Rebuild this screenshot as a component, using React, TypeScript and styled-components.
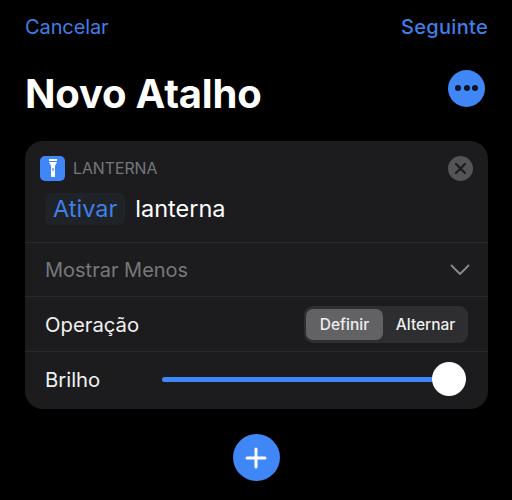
import React from "react";
import styled, { createGlobalStyle } from "styled-components";

const Global = createGlobalStyle`
  html, body { margin: 0; padding: 0; background: #000; }
  body { font-family: Inter, "Liberation Sans", sans-serif; }
`;

const Page = styled.div`
  width: 512px;
  height: 500px;
  overflow: hidden;
  background: #000;
  box-sizing: border-box;
  padding: 15px 24px 0 25px;
  display: flex;
  flex-direction: column;
`;

const NavBar = styled.div`
  display: flex;
  justify-content: space-between;
  align-items: center;
  height: 24px;
`;

const NavLink = styled.span<{ $strong?: boolean }>`
  font-size: 20px;
  line-height: 24px;
  letter-spacing: ${(p) => (p.$strong ? "0.3px" : "-0.1px")};
  font-weight: ${(p) => (p.$strong ? 500 : 400)};
  color: #3f7fe6;
`;

const TitleRow = styled.div`
  display: flex;
  justify-content: space-between;
  align-items: center;
  margin-top: 30px;
  height: 38px;
  padding-right: 3px;
`;

const Title = styled.h1`
  margin: 0;
  padding-top: 12px;
  font-size: 40px;
  line-height: 48px;
  font-weight: 700;
  letter-spacing: -0.2px;
  color: #fff;
`;

const MoreButton = styled.div`
  width: 37px;
  height: 37px;
  border-radius: 50%;
  background: #3f86f7;
  display: flex;
  align-items: center;
  justify-content: center;
  gap: 2.5px;
`;

const Dot = styled.span`
  width: 6px;
  height: 6px;
  border-radius: 50%;
  background: #0b1526;
`;

const Card = styled.div`
  margin-top: 34px;
  height: 268px;
  background: #1c1c1e;
  border-radius: 18px;
  display: flex;
  flex-direction: column;
`;

const ActionSection = styled.div`
  height: 101px;
  box-sizing: border-box;
  padding: 14px 15px 0;
`;

const ActionHeader = styled.div`
  display: flex;
  align-items: center;
  height: 26px;
  gap: 8px;
`;

const AppIcon = styled.div`
  width: 25px;
  height: 25px;
  border-radius: 5px;
  background: #3f86f7;
  display: flex;
  align-items: center;
  justify-content: center;
`;

const ActionName = styled.span`
  flex: 1;
  font-size: 15.8px;
  color: #77777b;
`;

const CloseButton = styled.div`
  width: 25px;
  height: 25px;
  border-radius: 50%;
  background: #545456;
  display: flex;
  align-items: center;
  justify-content: center;
`;

const Sentence = styled.div`
  display: flex;
  align-items: center;
  gap: 10px;
  margin: 12px 0 0 5px;
`;

const Token = styled.span`
  font-size: 23.5px;
  line-height: 32px;
  color: #3f7fe6;
  background: #1f2226;
  border-radius: 6px;
  padding: 0 8px;
`;

const Word = styled.span`
  font-size: 23.5px;
  line-height: 32px;
  color: #fff;
`;

const Row = styled.div<{ $height: number; $lift?: number }>`
  height: ${(p) => p.$height}px;
  box-sizing: border-box;
  border-top: 1px solid #29292b;
  padding: 0 20px ${(p) => p.$lift ?? 0}px;
  display: flex;
  align-items: center;
  justify-content: space-between;
`;

const MutedLabel = styled.span`
  font-size: 20px;
  color: #77777b;
`;

const Label = styled.span`
  font-size: 20.3px;
  color: #f2f2f2;
`;

const Chevron = styled.svg`
  margin-right: -2px;
`;

const Segmented = styled.div`
  width: 164px;
  height: 37px;
  box-sizing: border-box;
  padding: 3px 0 3px 2px;
  border-radius: 9px;
  background: #2e2e30;
  display: flex;
  align-items: stretch;
`;

const Segment = styled.div<{ $active?: boolean }>`
  flex: ${(p) => (p.$active ? "0 0 77px" : 1)};
  border-radius: 7px;
  display: flex;
  align-items: center;
  justify-content: center;
  font-size: 15.5px;
  font-weight: 500;
  letter-spacing: ${(p) => (p.$active ? 0 : "-0.05px")};
  color: #eeeeee;
  background: ${(p) => (p.$active ? "#626265" : "transparent")};
`;

const Slider = styled.div`
  width: 304px;
  height: 34px;
  margin-right: 2px;
  position: relative;
  display: flex;
  align-items: center;
`;

const Track = styled.div`
  width: 100%;
  height: 5px;
  border-radius: 3px;
  background: #3f86f7;
`;

const Thumb = styled.div`
  position: absolute;
  right: 0;
  top: 0;
  width: 34px;
  height: 34px;
  border-radius: 50%;
  background: #fff;
`;

const AddWrap = styled.div`
  display: flex;
  justify-content: center;
  margin-top: 25px;
  padding-right: 1px;
`;

const AddButton = styled.div`
  width: 47px;
  height: 47px;
  border-radius: 50%;
  background: #3f86f7;
  display: flex;
  align-items: center;
  justify-content: center;
`;

export default function App() {
  return (
    <>
      <Global />
      <Page>
        <NavBar>
          <NavLink>Cancelar</NavLink>
          <NavLink $strong>Seguinte</NavLink>
        </NavBar>
        <TitleRow>
          <Title>Novo Atalho</Title>
          <MoreButton>
            <Dot />
            <Dot />
            <Dot />
          </MoreButton>
        </TitleRow>
        <Card>
          <ActionSection>
            <ActionHeader>
              <AppIcon>
                <svg width="10" height="20" viewBox="0 0 10 20">
                  <path d="M1 1h8v2H1z" fill="#fff" />
                  <path d="M1 4h8L7 8v10.2a.9.9 0 0 1-.9.9H3.9a.9.9 0 0 1-.9-.9V8z" fill="#fff" />
                  <rect x="4.4" y="10" width="1.2" height="3" fill="#3f86f7" />
                </svg>
              </AppIcon>
              <ActionName>LANTERNA</ActionName>
              <CloseButton>
                <svg width="13" height="13" viewBox="0 0 13 13">
                  <path d="M2 2l9 9M11 2l-9 9" stroke="#1c1c1e" strokeWidth="2.2" strokeLinecap="round" />
                </svg>
              </CloseButton>
            </ActionHeader>
            <Sentence>
              <Token>Ativar</Token>
              <Word>lanterna</Word>
            </Sentence>
          </ActionSection>
          <Row $height={54}>
            <MutedLabel>Mostrar Menos</MutedLabel>
            <Chevron width="20" height="12" viewBox="0 0 20 12">
              <path d="M1.5 1.5L10 10l8.5-8.5" fill="none" stroke="#8a8a8e" strokeWidth="1.8" strokeLinecap="round" strokeLinejoin="round" />
            </Chevron>
          </Row>
          <Row $height={55}>
            <Label>Operação</Label>
            <Segmented>
              <Segment $active>Definir</Segment>
              <Segment>Alternar</Segment>
            </Segmented>
          </Row>
          <Row $height={58} $lift={3}>
            <Label>Brilho</Label>
            <Slider>
              <Track />
              <Thumb />
            </Slider>
          </Row>
        </Card>
        <AddWrap>
          <AddButton>
            <svg width="22" height="22" viewBox="0 0 22 22">
              <path d="M11 2v18M2 11h18" stroke="#fff" strokeWidth="3" strokeLinecap="round" />
            </svg>
          </AddButton>
        </AddWrap>
      </Page>
    </>
  );
}
